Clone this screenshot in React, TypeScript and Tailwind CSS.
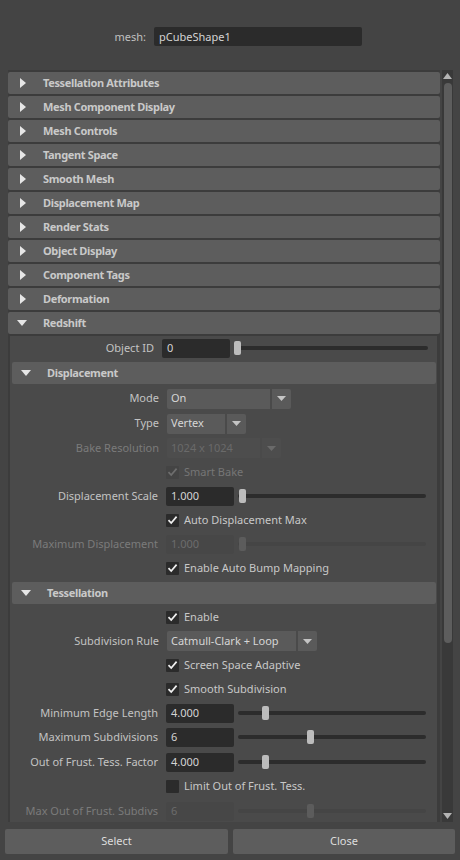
import React from 'react';

const FONT = "font-['Noto_Sans','Open_Sans',sans-serif]";

const CLOSED = [
  'Tessellation Attributes',
  'Mesh Component Display',
  'Mesh Controls',
  'Tangent Space',
  'Smooth Mesh',
  'Displacement Map',
  'Render Stats',
  'Object Display',
  'Component Tags',
  'Deformation',
];

function Arrow({ open }: { open: boolean }) {
  return open ? (
    <svg width="10" height="6" viewBox="0 0 10 6" className="shrink-0">
      <path d="M0 0 L10 0 L5 6 Z" fill="#e6e6e6" />
    </svg>
  ) : (
    <svg width="6" height="10" viewBox="0 0 6 10" className="shrink-0">
      <path d="M0 0 L6 5 L0 10 Z" fill="#e6e6e6" />
    </svg>
  );
}

function Header({ title, open = false }: { title: string; open?: boolean }) {
  return (
    <div className="h-[22px] shrink-0 rounded-[2px] bg-[#5d5d5d] flex items-center">
      <div className={`${open ? 'pl-[9px]' : 'pl-[12px]'} w-[35px] flex items-center`}>
        <Arrow open={open} />
      </div>
      <span className="text-[11px] font-bold text-[#c9c9c9] tracking-[-0.35px]">{title}</span>
    </div>
  );
}

function Label({ text, w, disabled = false }: { text: string; w: string; disabled?: boolean }) {
  return (
    <div className={`${w} shrink-0 text-right pr-[8px] text-[11px] ${disabled ? 'text-[#7b7b7b]' : 'text-[#c3c3c3]'}`}>
      {text}
    </div>
  );
}

function Slider({ pos, disabled = false, w }: { pos: number; disabled?: boolean; w: string }) {
  return (
    <div className={`${w} relative h-[14px] ml-[4px] flex items-center`}>
      <div className={`w-full h-[4px] rounded-full ${disabled ? 'bg-[#454545]' : 'bg-[#2c2c2c]'}`} />
      <div
        className={`absolute top-0 w-[7px] h-[14px] rounded-[2px] ${disabled ? 'bg-[#5c5c5c]' : 'bg-[#bcbcbc]'}`}
        style={{ left: pos }}
      />
    </div>
  );
}

function Field({ value, disabled = false }: { value: string; disabled?: boolean }) {
  return (
    <div
      className={`w-[68px] h-[19px] shrink-0 rounded-[2px] flex items-center pl-[5px] text-[11px] ${
        disabled ? 'bg-[#474747] text-[#6c6c6c]' : 'bg-[#2b2b2b] text-[#d4d4d4]'
      }`}
    >
      {value}
    </div>
  );
}

function SliderRow({
  label, value, pos, disabled = false,
}: { label: string; value: string; pos: number; disabled?: boolean }) {
  return (
    <div className="h-[24px] flex items-center">
      <Label text={label} w="w-[156px]" disabled={disabled} />
      <Field value={value} disabled={disabled} />
      <Slider pos={pos} disabled={disabled} w="w-[188px]" />
    </div>
  );
}

function Check({ label, checked = true, disabled = false }: { label: string; checked?: boolean; disabled?: boolean }) {
  return (
    <div className="h-[24px] flex items-center">
      <div className="w-[156px] shrink-0" />
      <div
        className={`w-[13px] h-[13px] rounded-[1px] flex items-center justify-center ${
          disabled ? 'bg-[#444444]' : 'bg-[#2b2b2b]'
        }`}
      >
        {checked && (
          <svg width="11" height="10" viewBox="0 0 11 10">
            <path
              d="M1.5 5.2 L4.2 8 L9.6 1.6"
              fill="none"
              stroke={disabled ? '#6e6e6e' : '#f0f0f0'}
              strokeWidth="1.7"
            />
          </svg>
        )}
      </div>
      <span className={`ml-[5px] text-[11px] ${disabled ? 'text-[#767676]' : 'text-[#c8c8c8]'}`}>{label}</span>
    </div>
  );
}

function Dropdown({
  label, value, w, disabled = false, h = 'h-[25px]',
}: { label: string; value: string; w: string; disabled?: boolean; h?: string }) {
  const bg = disabled ? 'bg-[#4d4d4d]' : 'bg-[#5a5a5a]';
  return (
    <div className={`${h} flex items-center`}>
      <Label text={label} w="w-[157px]" disabled={disabled} />
      <div className={`${w} h-[20px] rounded-l-[2px] ${bg} flex items-center pl-[4px] text-[11px] ${disabled ? 'text-[#6a6a6a]' : 'text-[#d6d6d6]'}`}>
        {value}
      </div>
      <div className={`w-[19px] h-[20px] ml-[2px] rounded-r-[2px] ${bg} flex items-center justify-center`}>
        <svg width="9" height="5" viewBox="0 0 9 5">
          <path d="M0 0 L9 0 L4.5 5 Z" fill={disabled ? '#6a6a6a' : '#c4c4c4'} />
        </svg>
      </div>
    </div>
  );
}

export default function App() {
  return (
    <div className={`w-[460px] h-[860px] bg-[#444444] flex flex-col overflow-hidden ${FONT}`}>
      {/* mesh name */}
      <div className="h-[70px] shrink-0 flex pt-[27px]">
        <div className="w-[146px] text-right text-[11px] text-[#c0c0c0] leading-[19px]">mesh:</div>
        <div className="ml-[8px] w-[208px] h-[19px] rounded-[2px] bg-[#2b2b2b] pl-[5px] text-[11px] text-[#d4d4d4] leading-[19px]">
          pCubeShape1
        </div>
      </div>

      {/* scroll frame */}
      <div className="h-[752px] shrink-0 ml-[8px] mr-[7px] flex overflow-hidden">
        <div className="w-[432px] pt-[2px] bg-[#3c3c3c] flex flex-col gap-[2px] overflow-hidden">
          {CLOSED.map((t) => (
            <Header key={t} title={t} />
          ))}
          <Header title="Redshift" open />
          <div className="ml-[2px] mr-[3px] bg-[#4a4a4a] flex flex-col">
            <div className="h-[24px] flex items-center">
              <Label text="Object ID" w="w-[152px]" />
              <Field value="0" />
              <Slider pos={0} w="w-[194px]" />
            </div>
            <div className="mt-[2px] ml-[2px] mr-[1px]">
              <Header title="Displacement" open />
            </div>
            <div className="mt-[2px] flex flex-col">
              <Dropdown label="Mode" value="On" w="w-[103px]" />
              <Dropdown label="Type" value="Vertex" w="w-[58px]" />
              <Dropdown label="Bake Resolution" value="1024 x 1024" w="w-[93px]" disabled h="h-[24px]" />
              <Check label="Smart Bake" disabled />
              <SliderRow label="Displacement Scale" value="1.000" pos={1} />
              <Check label="Auto Displacement Max" />
              <SliderRow label="Maximum Displacement" value="1.000" pos={1} disabled />
              <Check label="Enable Auto Bump Mapping" />
            </div>
            <div className="mt-[2px] ml-[2px] mr-[1px]">
              <Header title="Tessellation" open />
            </div>
            <div className="mt-[1px] flex flex-col">
              <Check label="Enable" />
              <Dropdown label="Subdivision Rule" value="Catmull-Clark + Loop" w="w-[129px]" h="h-[24px]" />
              <Check label="Screen Space Adaptive" />
              <Check label="Smooth Subdivision" />
              <SliderRow label="Minimum Edge Length" value="4.000" pos={24} />
              <SliderRow label="Maximum Subdivisions" value="6" pos={69} />
              <div className="h-[1px]" />
              <SliderRow label="Out of Frust. Tess. Factor" value="4.000" pos={24} />
              <Check label="Limit Out of Frust. Tess." checked={false} />
              <div className="h-[1px]" />
              <SliderRow label="Max Out of Frust. Subdivs" value="6" pos={69} disabled />
              <div className="h-[20px]" />
            </div>
          </div>
        </div>

        {/* scrollbar */}
        <div className="ml-[2px] w-[11px] bg-[#393939] flex flex-col items-center">
          <svg width="9" height="6" viewBox="0 0 9 6" className="mt-[3px]">
            <path d="M0 6 L9 6 L4.5 0 Z" fill="#b4b4b4" />
          </svg>
          <div className="mt-[4px] w-[8px] h-[560px] rounded-full bg-[#5d5d5d]" />
          <div className="flex-1" />
          <svg width="9" height="6" viewBox="0 0 9 6" className="mb-[3px]">
            <path d="M0 0 L9 0 L4.5 6 Z" fill="#b4b4b4" />
          </svg>
        </div>
      </div>

      {/* buttons */}
      <div className="mt-[7px] flex px-[5px] gap-[5px]">
        <div className="w-[223px] h-[25px] rounded-[2px] bg-[#5d5d5d] flex items-center justify-center text-[11px] text-[#dedede]">
          Select
        </div>
        <div className="flex-1 h-[25px] rounded-[2px] bg-[#5d5d5d] flex items-center justify-center text-[11px] text-[#dedede]">
          Close
        </div>
      </div>
    </div>
  );
}
